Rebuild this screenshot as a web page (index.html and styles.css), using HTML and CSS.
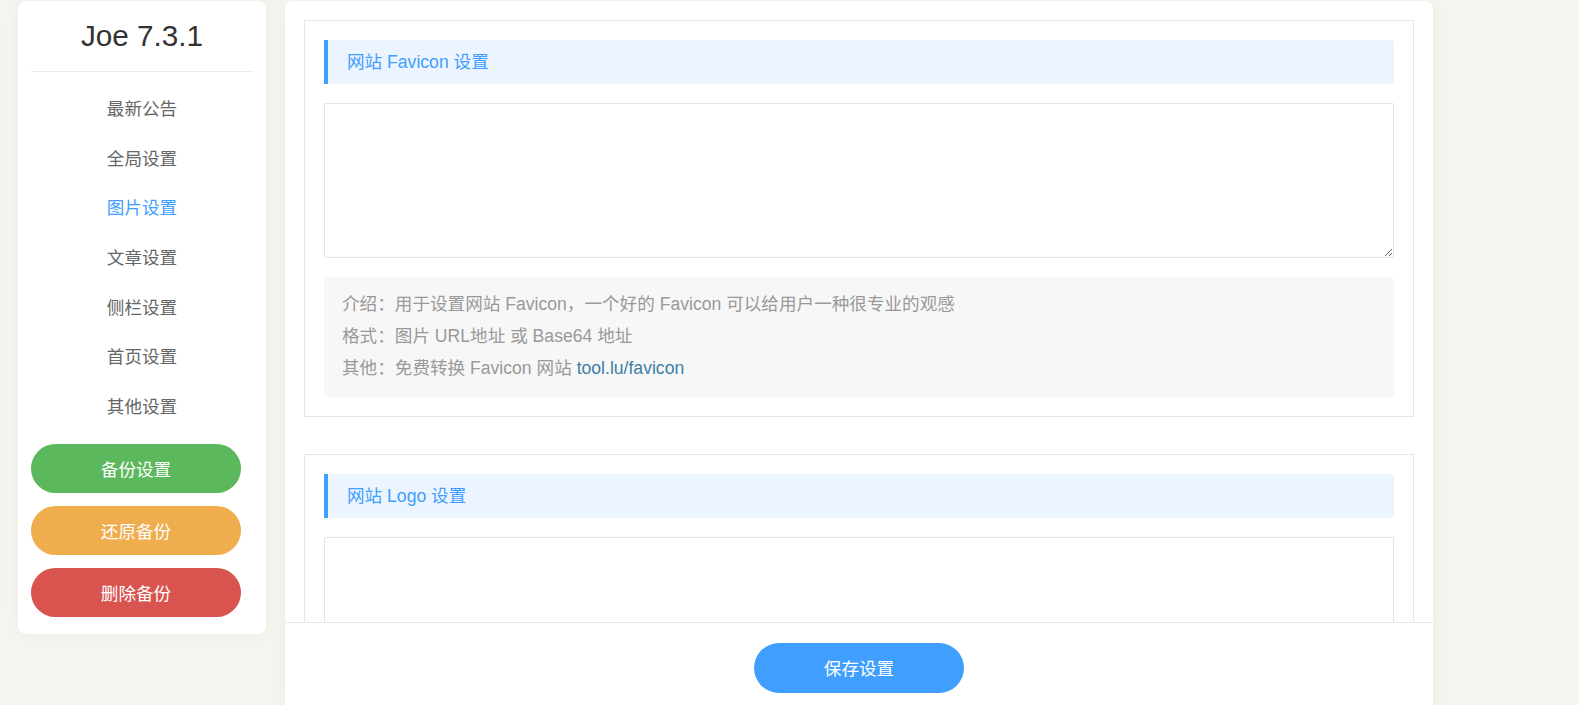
FILE: index.html
```html
<!DOCTYPE html>
<html>
<head>
  <title>Joe 主题设置</title>
  <link rel="stylesheet" href="styles.css">
</head>
<body>
  <div class="page">
    <!-- 左侧菜单 -->
    <div class="sidebar">
      <div class="logo">Joe 7.3.1</div>
      <ul class="menu">
        <li>最新公告</li>
        <li>全局设置</li>
        <li class="active">图片设置</li>
        <li>文章设置</li>
        <li>侧栏设置</li>
        <li>首页设置</li>
        <li>其他设置</li>
      </ul>
      <button class="btn btn-backup">备份设置</button>
      <button class="btn btn-restore">还原备份</button>
      <button class="btn btn-delete">删除备份</button>
    </div>

    <!-- 右侧设置项 -->
    <div class="main">
      <div class="main-body">
        <div class="option">
          <div class="option-title">网站 Favicon 设置</div>
          <textarea class="option-input"></textarea>
          <div class="option-desc">
            <p>介绍：用于设置网站 Favicon，一个好的 Favicon 可以给用户一种很专业的观感</p>
            <p>格式：图片 URL地址 或 Base64 地址</p>
            <p>其他：免费转换 Favicon 网站 <a href="#">tool.lu/favicon</a></p>
          </div>
        </div>

        <div class="option">
          <div class="option-title">网站 Logo 设置</div>
          <textarea class="option-input"></textarea>
        </div>
      </div>
      <div class="main-foot">
        <button class="btn btn-save">保存设置</button>
      </div>
    </div>
  </div>
</body>
</html>
```

FILE: styles.css
```css
html, body {
  height: 100%;
  overflow: hidden;
}

body {
  margin: 0;
  background-color: #f5f5f0;
  font-family: "Liberation Sans", "Noto Sans CJK SC", sans-serif;
  color: #666;
}

.page {
  display: flex;
  align-items: flex-start;
  gap: 19px;
  padding: 1px 0 0 18px;
}

.sidebar {
  width: 248px;
  flex-shrink: 0;
  box-sizing: border-box;
  padding: 0 13px 17px;
  background-color: #fff;
  border-radius: 8px;
  box-shadow: 0 0 20px rgba(0, 0, 0, 0.04);
}

.logo {
  height: 70px;
  line-height: 70px;
  text-align: center;
  font-size: 29.7px;
  color: #333;
  border-bottom: 1px solid #ececec;
}

.menu {
  list-style: none;
  margin: 13px 0 0;
  padding: 0;
}

.menu li {
  height: 49.7px;
  line-height: 49.7px;
  text-align: center;
  font-size: 17.6px;
  color: #666;
  cursor: pointer;
}

.menu li.active {
  color: #409eff;
}

.btn {
  display: block;
  width: 210px;
  height: 49.5px;
  border: none;
  border-radius: 25px;
  color: #fff;
  font-size: 17.6px;
  font-family: inherit;
  cursor: pointer;
}

.sidebar .btn {
  margin-top: 12.5px;
}

.sidebar .btn-backup {
  margin-top: 11px;
  background-color: #5cb85c;
}

.btn-restore {
  background-color: #f0ad4e;
}

.btn-delete {
  background-color: #d9534f;
}

.btn-save {
  margin: 0 auto;
  background-color: #409eff;
}

.main {
  width: 1148px;
  flex-shrink: 0;
  background-color: #fff;
  border-radius: 8px 8px 0 0;
  box-shadow: 0 0 20px rgba(0, 0, 0, 0.04);
}

.main-body {
  height: 621px;
  box-sizing: border-box;
  padding: 19px 19px 0;
  overflow: hidden;
}

.option {
  border: 1px solid #e6e6e6;
  padding: 19px;
  margin-bottom: 37px;
}

.option-title {
  height: 44px;
  line-height: 44px;
  padding-left: 19px;
  border-left: 4px solid #409eff;
  border-radius: 0 4px 4px 0;
  background-color: #ecf5ff;
  color: #409eff;
  font-size: 17.6px;
}

.option-input {
  display: block;
  width: 100%;
  height: 155px;
  box-sizing: border-box;
  margin-top: 19px;
  border: 1px solid #e3e3e3;
  border-radius: 2px;
  outline: none;
}

.option-desc {
  margin-top: 19px;
  padding: 11px 18px 13px;
  background-color: #f7f7f7;
  border-radius: 4px;
  color: #999;
  font-size: 17.6px;
  line-height: 32px;
}

.option-desc p {
  margin: 0;
}

.option-desc a {
  color: #3d80a6;
  text-decoration: none;
}

.main-foot {
  border-top: 1px solid #e8e8e8;
  padding: 20px 0;
}
```
